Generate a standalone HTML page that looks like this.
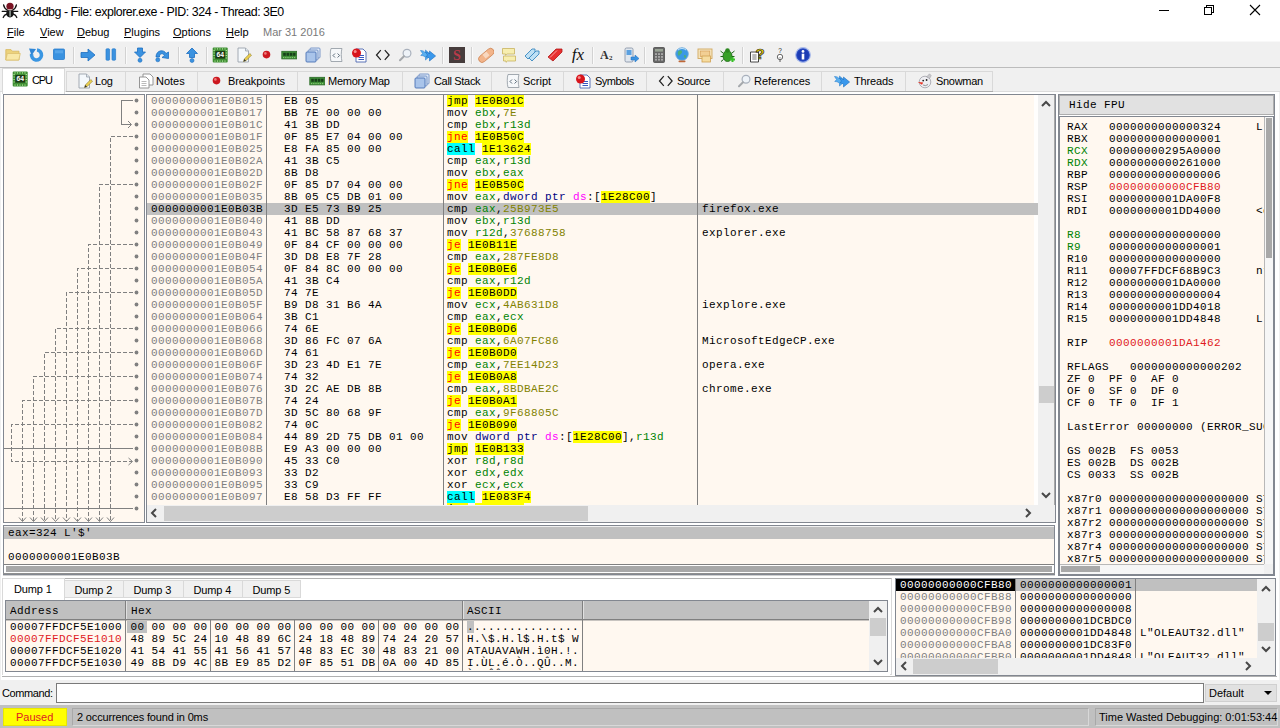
<!DOCTYPE html>
<html><head><meta charset="utf-8"><title>x64dbg - File: explorer.exe - PID: 324 - Thread: 3E0</title>
<style>
html,body{margin:0;padding:0}
body{width:1280px;height:728px;overflow:hidden;background:#f0f0f0;position:relative;font-family:"Liberation Sans",sans-serif;font-size:11px;color:#000}
#w{position:absolute;left:0;top:0;width:1280px;height:728px;overflow:hidden}
#w div,#w span,#w svg{position:absolute;box-sizing:border-box}
.m{font-family:"Liberation Mono","DejaVu Sans Mono",monospace;font-size:11px;letter-spacing:0.4px;line-height:12px;height:12px;white-space:pre;color:#000}
.u{font-family:"Liberation Sans",sans-serif;font-size:11px;line-height:14px;white-space:pre;color:#000}
.t{font-family:"Liberation Sans",sans-serif;font-size:12.4px;letter-spacing:-0.45px;line-height:16px;white-space:pre;color:#000}
.clip{overflow:hidden}
</style></head><body><div id="w">
<div style="left:0px;top:0px;width:1280px;height:41px;background:#ffffff;"></div>
<span class="t" style="left:23px;top:4px;">x64dbg - File: explorer.exe - PID: 324 - Thread: 3E0</span>
<svg style="left:0px;top:0px" width="20" height="20" viewBox="0 0 20 20"><g stroke="#111" stroke-width="1.3" fill="none" stroke-linecap="round"><path d="M7.5 10 C5 9 4 7 3.6 4.8 M12.5 10 C15 9 16 7 16.4 4.8 M2.2 11.3 H17.8 M7 14 C5 14.5 3.8 15.5 3.2 17.5 M13 14 C15 14.5 16.2 15.5 16.8 17.5"/></g><ellipse cx="10" cy="13" rx="3.7" ry="4.4" fill="#151515"/><rect x="9.5" y="10.5" width="1.1" height="6" fill="#c8d8d0"/><circle cx="10" cy="6.3" r="3.6" fill="#7a1424"/><rect x="7.5" y="9.2" width="5" height="1" fill="#e8c8c8"/></svg>
<svg style="left:1150px;top:0" width="130" height="22" viewBox="0 0 130 22"><g stroke="#000" stroke-width="1" fill="none" shape-rendering="crispEdges"><path d="M9 10.5 H19"/><rect x="54.5" y="7.5" width="7" height="7"/><path d="M56.5 7.5 V5.5 H63.5 V12.5 H61.5"/></g><path d="M100 5 L110 15 M110 5 L100 15" stroke="#000" stroke-width="1.1" fill="none"/></svg>
<span class="u" style="left:7px;top:25px;"><u>F</u>ile</span>
<span class="u" style="left:40px;top:25px;"><u>V</u>iew</span>
<span class="u" style="left:77px;top:25px;"><u>D</u>ebug</span>
<span class="u" style="left:124px;top:25px;"><u>P</u>lugins</span>
<span class="u" style="left:173px;top:25px;"><u>O</u>ptions</span>
<span class="u" style="left:226px;top:25px;"><u>H</u>elp</span>
<span class="u" style="left:263px;top:25px;color:#7a7a7a;">Mar 31 2016</span>
<div style="left:0px;top:41px;width:1280px;height:27px;background:#f0f0f0;"></div>
<div style="left:0px;top:41px;width:1280px;height:1px;background:#f8f8f8;"></div>
<div style="left:0px;top:67px;width:1280px;height:1px;background:#bcbcbc;"></div>
<svg style="left:5px;top:47px" width="16" height="16" viewBox="0 0 16 16"><path d="M0.8 2.6 H6 L7.3 4.2 H14 V13 H0.8 Z" fill="#ecd27c" stroke="#d8b85e" stroke-width=".8"/><path d="M0.8 13 L2.3 6.5 H15.3 L13.8 13 Z" fill="#f8e8a8" stroke="#dcc070" stroke-width=".8"/></svg>
<svg style="left:29px;top:47px" width="16" height="16" viewBox="0 0 16 16"><path d="M8 3 A5 5 0 1 1 2.6 7" fill="none" stroke="#3a96e2" stroke-width="3.6"/><path d="M0 1.6 L7 2 L2.6 8.4 Z" fill="#2f86d6"/></svg>
<svg style="left:52px;top:47px" width="16" height="16" viewBox="0 0 16 16"><rect x="1.5" y="2" width="11" height="10.5" rx="1" fill="#3a92e0" stroke="#2a7ccc" stroke-width=".8"/><rect x="3" y="3.3" width="8" height="3" fill="#6bb3ee" opacity=".6"/></svg>
<div style="left:73px;top:47px;width:1px;height:17px;background:#d2d2d2;"></div>
<div style="left:74px;top:47px;width:1px;height:17px;background:#fafafa;"></div>
<svg style="left:80px;top:47px" width="16" height="16" viewBox="0 0 16 16"><path d="M1 5.5 H8 V2 L15 8 L8 14 V10.5 H1 Z" fill="#3a92e0" stroke="#1d6fc0" stroke-width=".8"/></svg>
<svg style="left:103px;top:47px" width="16" height="16" viewBox="0 0 16 16"><rect x="3" y="1.8" width="3.6" height="11.4" rx=".8" fill="#3a92e0" stroke="#2a7ccc" stroke-width=".7"/><rect x="9" y="1.8" width="3.6" height="11.4" rx=".8" fill="#3a92e0" stroke="#2a7ccc" stroke-width=".7"/></svg>
<div style="left:125px;top:47px;width:1px;height:17px;background:#d2d2d2;"></div>
<div style="left:126px;top:47px;width:1px;height:17px;background:#fafafa;"></div>
<svg style="left:132px;top:47px" width="16" height="16" viewBox="0 0 16 16"><path d="M5.5 1 H10.5 V5 H13.5 L8 10.5 L2.5 5 H5.5 Z" fill="#3a92e0" stroke="#1d6fc0" stroke-width=".8"/><circle cx="8" cy="13.3" r="2" fill="#3a92e0" stroke="#1d6fc0" stroke-width=".6"/></svg>
<svg style="left:154px;top:47px" width="16" height="16" viewBox="0 0 16 16"><path d="M2 10 C2 3 10 2 12 6.5 L14.5 5 L14.5 11.5 L8 10.5 L10.5 8.5 C9 5.5 5 6.5 5.5 10 Z" fill="#3a92e0" stroke="#1d6fc0" stroke-width=".8"/><circle cx="3.8" cy="12.8" r="2" fill="#3a92e0" stroke="#1d6fc0" stroke-width=".6"/></svg>
<div style="left:178px;top:47px;width:1px;height:17px;background:#d2d2d2;"></div>
<div style="left:179px;top:47px;width:1px;height:17px;background:#fafafa;"></div>
<svg style="left:184px;top:47px" width="16" height="16" viewBox="0 0 16 16"><path d="M5.5 10.5 H10.5 V6.5 H13.5 L8 1 L2.5 6.5 H5.5 Z" fill="#3a92e0" stroke="#1d6fc0" stroke-width=".8"/><circle cx="8" cy="13.5" r="2" fill="#3a92e0" stroke="#1d6fc0" stroke-width=".6"/></svg>
<div style="left:206px;top:47px;width:1px;height:17px;background:#d2d2d2;"></div>
<div style="left:207px;top:47px;width:1px;height:17px;background:#fafafa;"></div>
<svg style="left:212px;top:47px" width="16" height="16" viewBox="0 0 16 16"><rect x="0.7" y="0.5" width="15" height="15" rx="1" fill="#3f8f34"/><path d="M3 1.2 V2.6 M5.5 1.2 V2.6 M8 1.2 V2.6 M10.5 1.2 V2.6 M13 1.2 V2.6 M3 13.4 V14.8 M5.5 13.4 V14.8 M8 13.4 V14.8 M10.5 13.4 V14.8 M13 13.4 V14.8 M1.4 3.5 H2.8 M1.4 6 H2.8 M1.4 8.5 H2.8 M1.4 11 H2.8 M13.6 3.5 H15 M13.6 6 H15 M13.6 8.5 H15 M13.6 11 H15" stroke="#a8dc90" stroke-width="1"/><rect x="3.3" y="4" width="9.8" height="7.6" fill="#1c3a16"/><text x="8.2" y="10.4" font-family="Liberation Sans,sans-serif" font-size="6.8" font-weight="bold" fill="#fff" text-anchor="middle">64</text></svg>
<svg style="left:237px;top:47px" width="16" height="16" viewBox="0 0 16 16"><path d="M1 1 H8.5 L11.5 4 V15 H1 Z" fill="#f4f8fc" stroke="#9aa2ac" stroke-width=".9"/><path d="M8.5 1 V4 H11.5" fill="#dde4ec" stroke="#9aa2ac" stroke-width=".8"/><path d="M6.5 14.5 L7.3 12 L12.8 6.5 L14.5 8.2 L9 13.7 Z" fill="#ecd050" stroke="#8a7a30" stroke-width=".6"/><path d="M6.5 14.5 L7.3 12 L9 13.7 Z" fill="#333"/></svg>
<svg style="left:258px;top:47px" width="16" height="16" viewBox="0 0 16 16"><circle cx="8.5" cy="7.6" r="3.8" fill="#cc1820"/><circle cx="7.4" cy="6.4" r="1.3" fill="#ee7a7a"/></svg>
<svg style="left:281px;top:47px" width="16" height="16" viewBox="0 0 16 16"><rect x="0.8" y="4.3" width="15" height="7.6" fill="#3f8f38" stroke="#2a6a26" stroke-width=".8"/><rect x="2.2" y="5.8" width="2.6" height="3" fill="#17401a"/><rect x="5.5" y="5.8" width="2.6" height="3" fill="#17401a"/><rect x="8.8" y="5.8" width="2.6" height="3" fill="#17401a"/><rect x="12.1" y="5.8" width="2.4" height="3" fill="#17401a"/><path d="M2 10.6 H14.6" stroke="#8fce7c" stroke-width="1" stroke-dasharray="1.2 1"/></svg>
<svg style="left:305px;top:47px" width="16" height="16" viewBox="0 0 16 16"><rect x="5" y="1" width="10" height="10" rx="1" fill="#dfe9f7" stroke="#6f8fc4" stroke-width=".9"/><rect x="3" y="3" width="10" height="10" rx="1" fill="#cfdef3" stroke="#6f8fc4" stroke-width=".9"/><rect x="1" y="5" width="10" height="10" rx="1" fill="#a9c4ea" stroke="#4a72b4" stroke-width=".9"/></svg>
<svg style="left:328px;top:47px" width="16" height="16" viewBox="0 0 16 16"><path d="M3 1.5 H14 C13 4 13 11 14 14.5 H3 C2 11 2 4 3 1.5 Z" fill="#f6f8fa" stroke="#98a0a8" stroke-width=".9"/><path d="M7 6.5 L5 8.5 L7 10.5 M9.6 6.5 L11.6 8.5 L9.6 10.5" fill="none" stroke="#4a5a6a" stroke-width=".9"/></svg>
<svg style="left:351px;top:47px" width="16" height="16" viewBox="0 0 16 16"><path d="M5 2 H12 L15 5 V15 H5 Z" fill="#fff" stroke="#4a64b0" stroke-width=".9"/><path d="M7.5 8.5 H13 M7.5 10.5 H13 M7.5 12.5 H13" stroke="#3858c0" stroke-width="1"/><circle cx="5.5" cy="6" r="4.5" fill="#d8141c"/><circle cx="4.2" cy="4.6" r="1.5" fill="#f48a8a"/></svg>
<svg style="left:375px;top:47px" width="16" height="16" viewBox="0 0 16 16"><path d="M5.8 3.2 L1.5 8 L5.8 12.8 M9.8 3.2 L14.1 8 L9.8 12.8" fill="none" stroke="#222" stroke-width="1.25"/></svg>
<svg style="left:397px;top:47px" width="16" height="16" viewBox="0 0 16 16"><circle cx="10" cy="6.3" r="3.9" fill="#eef3f8" stroke="#a8b0bc" stroke-width="1.2"/><path d="M7 9.3 L3 13.3" stroke="#a4a8ac" stroke-width="2" stroke-linecap="round"/></svg>
<svg style="left:420px;top:47px" width="16" height="16" viewBox="0 0 16 16"><path d="M0.5 3.5 C3 3.5 4.5 4.5 5.5 6 V3 L11 8 L5.5 13 V10.5 C4 9 3 8.5 0.8 8.5 L2.6 6.5 Z" fill="#5ab0f0" stroke="#2a80d0" stroke-width=".6"/><path d="M5.5 5 C7.5 5 8.5 5.8 9.5 7 V4 L15.6 9 L9.5 14 V11.3 C8.3 10.2 7.3 10 5.8 10 L7.5 8 Z" fill="#3a98ec" stroke="#1d6fc0" stroke-width=".6"/></svg>
<div style="left:442px;top:47px;width:1px;height:17px;background:#d2d2d2;"></div>
<div style="left:443px;top:47px;width:1px;height:17px;background:#fafafa;"></div>
<svg style="left:449px;top:47px" width="16" height="16" viewBox="0 0 16 16"><rect x="0" y="0" width="16" height="16" fill="#463c3c"/><text x="8" y="13" font-family="Liberation Serif,serif" font-size="14" font-weight="bold" fill="#b83a4a" text-anchor="middle">S</text></svg>
<div style="left:471px;top:47px;width:1px;height:17px;background:#d2d2d2;"></div>
<div style="left:472px;top:47px;width:1px;height:17px;background:#fafafa;"></div>
<svg style="left:478px;top:47px" width="16" height="16" viewBox="0 0 16 16"><rect x="-1" y="5" width="18" height="7" rx="3.5" fill="#f2b48a" stroke="#d08858" stroke-width=".8" transform="rotate(-40 8 8)"/><rect x="5.5" y="5.5" width="5" height="5" fill="#f8d8c0" transform="rotate(-40 8 8)"/></svg>
<svg style="left:501px;top:47px" width="16" height="16" viewBox="0 0 16 16"><path d="M1.5 1.5 H13.5 V7 H6 L4.5 8.2 V7 H1.5 Z" fill="#f7eeb0" stroke="#c8b25e" stroke-width=".8"/><path d="M2.5 9 H14.5 V14 H6.5 L5 15.3 V14 H2.5 Z" fill="#f7eeb0" stroke="#c8b25e" stroke-width=".8"/></svg>
<svg style="left:524px;top:47px" width="16" height="16" viewBox="0 0 16 16"><path d="M1 9 L8 2 L11 2 L11 5 L4 12 Z" fill="#bfe0f4" stroke="#3a88c0" stroke-width=".9" /><path d="M5 13 L12 6 L15 6 L15 9 L8 16 Z" fill="#bfe0f4" stroke="#3a88c0" stroke-width=".9" transform="translate(0,-2)"/></svg>
<svg style="left:547px;top:47px" width="16" height="16" viewBox="0 0 16 16"><path d="M1 10 L9 2 L15 2 L15 5 L6 14 Z" fill="#e83030" stroke="#b01818" stroke-width=".8"/><path d="M3 10.5 L10 3.5" stroke="#f8a0a0" stroke-width="1"/></svg>
<svg style="left:570px;top:47px" width="16" height="16" viewBox="0 0 16 16"><text x="8" y="13" font-family="Liberation Serif,serif" font-size="17" font-style="italic" fill="#111" text-anchor="middle">fx</text></svg>
<div style="left:592px;top:47px;width:1px;height:17px;background:#d2d2d2;"></div>
<div style="left:593px;top:47px;width:1px;height:17px;background:#fafafa;"></div>
<svg style="left:600px;top:47px" width="16" height="16" viewBox="0 0 16 16"><text x="0" y="12" font-family="Liberation Serif,serif" font-size="12" font-weight="bold" fill="#333">A</text><text x="9" y="12.5" font-family="Liberation Serif,serif" font-size="7" font-weight="bold" fill="#333">2</text></svg>
<svg style="left:623px;top:47px" width="16" height="16" viewBox="0 0 16 16"><rect x="2" y="1" width="8" height="14" rx="1.5" fill="#dfe6ee" stroke="#8a96a8" stroke-width=".9"/><rect x="3.5" y="3" width="5" height="5" fill="#5aa0e0"/><path d="M8 10 H12 V8 L16 11.5 L12 15 V13 H8 Z" fill="#3a92e0" stroke="#1d6fc0" stroke-width=".5"/></svg>
<div style="left:644px;top:47px;width:1px;height:17px;background:#d2d2d2;"></div>
<div style="left:645px;top:47px;width:1px;height:17px;background:#fafafa;"></div>
<svg style="left:651px;top:47px" width="16" height="16" viewBox="0 0 16 16"><rect x="2.5" y="0.5" width="11" height="15" rx="1" fill="#666" stroke="#4a4a4a" stroke-width=".8"/><rect x="4" y="2" width="8" height="2.6" fill="#9aa496"/><g fill="#a8a8a8"><rect x="4" y="6.2" width="2" height="1.8"/><rect x="7" y="6.2" width="2" height="1.8"/><rect x="10" y="6.2" width="2" height="1.8"/><rect x="4" y="9" width="2" height="1.8"/><rect x="7" y="9" width="2" height="1.8"/><rect x="10" y="9" width="2" height="1.8"/><rect x="4" y="11.8" width="2" height="1.8"/><rect x="7" y="11.8" width="2" height="1.8"/><rect x="10" y="11.8" width="2" height="1.8"/></g></svg>
<svg style="left:674px;top:47px" width="16" height="16" viewBox="0 0 16 16"><circle cx="8" cy="7" r="6.3" fill="#3a98e4" stroke="#6aa8d8" stroke-width=".8"/><path d="M4.5 4 C6 2.5 8.5 3 8 5.5 C7.5 7.5 5.5 7 5 9 C3.5 8 3.5 5 4.5 4 Z M10 8 C11.5 7.5 12.5 9 12 10.5 C11 11.5 9.5 10.5 10 8 Z" fill="#4cb07a"/><path d="M4 3 A6 6 0 0 1 12 3" stroke="#bfe0f8" stroke-width="1" fill="none"/><rect x="4.5" y="13.5" width="7" height="1.8" rx=".8" fill="#c06838"/></svg>
<svg style="left:697px;top:47px" width="16" height="16" viewBox="0 0 16 16"><rect x="1" y="2" width="14" height="9.5" fill="#f6e6c0" stroke="#d0a860" stroke-width=".9"/><rect x="3.2" y="4" width="9.6" height="5.5" fill="#f2cf94" stroke="#d09850" stroke-width=".6"/><rect x="5" y="9" width="8.5" height="6" fill="#f6dca0" stroke="#d0a050" stroke-width=".8"/></svg>
<svg style="left:720px;top:47px" width="16" height="16" viewBox="0 0 16 16"><ellipse cx="7.5" cy="9" rx="4.5" ry="5.5" fill="#38a028" stroke="#1c6814" stroke-width=".8"/><circle cx="7.5" cy="3.5" r="2.3" fill="#2c8820"/><path d="M3 6 L0.5 4 M12 6 L14.5 4 M3 9.5 H0.5 M12 9.5 H14.5 M3.5 12.5 L1 14.5" stroke="#1c6814" stroke-width="1"/><path d="M12.5 10 V15 M10 12.5 H15" stroke="#38c028" stroke-width="2"/></svg>
<div style="left:742px;top:47px;width:1px;height:17px;background:#d2d2d2;"></div>
<div style="left:743px;top:47px;width:1px;height:17px;background:#fafafa;"></div>
<svg style="left:749px;top:47px" width="16" height="16" viewBox="0 0 16 16"><path d="M1.5 5 H9.5 V15 H1.5 Z" fill="#fff" stroke="#333" stroke-width=".9"/><path d="M3.3 8 H7.6 M3.3 10 H7.6 M3.3 12 H7.6" stroke="#666" stroke-width=".9"/><text x="11" y="12" font-family="Liberation Sans,sans-serif" font-size="15" font-weight="bold" fill="#f4dc00" stroke="#222" stroke-width=".7" text-anchor="middle">?</text></svg>
<svg style="left:772px;top:47px" width="16" height="16" viewBox="0 0 16 16"><text x="8" y="5.5" font-family="Liberation Sans,sans-serif" font-size="6.5" fill="#222" text-anchor="middle">?</text><circle cx="8" cy="10" r="2.7" fill="#fff" stroke="#444" stroke-width=".8"/><path d="M8 12.7 V15" stroke="#444" stroke-width=".9"/><path d="M6.8 10.6 Q8 11.6 9.2 10.6" stroke="#444" stroke-width=".5" fill="none"/></svg>
<svg style="left:795px;top:47px" width="16" height="16" viewBox="0 0 16 16"><circle cx="8" cy="8" r="7.4" fill="#2a4cc4" stroke="#b0c0ec" stroke-width="1.1"/><circle cx="8" cy="8" r="5.8" fill="#1c3cb4"/><circle cx="8" cy="4.4" r="1.4" fill="#fff"/><rect x="6.7" y="6.7" width="2.6" height="5.8" fill="#fff"/></svg>
<div style="left:0px;top:68px;width:1280px;height:25px;background:#f0f0f0;"></div>
<div style="left:0px;top:91px;width:1280px;height:1px;background:#dcdcdc;"></div>
<div style="left:66px;top:91px;width:927px;height:1px;background:#acacac;"></div>
<div style="left:1px;top:92px;width:1278px;height:588px;background:#ffffff;"></div>
<div style="left:2px;top:676px;width:1275px;height:1px;background:#b0b0b0;"></div>
<div style="left:2px;top:68px;width:63px;height:26px;background:#ffffff;border:1px solid #d9d9d9;border-bottom:none;"></div>
<svg style="left:12px;top:71px" width="16" height="16" viewBox="0 0 16 16"><rect x="0.7" y="0.5" width="15" height="15" rx="1" fill="#3f8f34"/><path d="M3 1.2 V2.6 M5.5 1.2 V2.6 M8 1.2 V2.6 M10.5 1.2 V2.6 M13 1.2 V2.6 M3 13.4 V14.8 M5.5 13.4 V14.8 M8 13.4 V14.8 M10.5 13.4 V14.8 M13 13.4 V14.8 M1.4 3.5 H2.8 M1.4 6 H2.8 M1.4 8.5 H2.8 M1.4 11 H2.8 M13.6 3.5 H15 M13.6 6 H15 M13.6 8.5 H15 M13.6 11 H15" stroke="#a8dc90" stroke-width="1"/><rect x="3.3" y="4" width="9.8" height="7.6" fill="#1c3a16"/><text x="8.2" y="10.4" font-family="Liberation Sans,sans-serif" font-size="6.8" font-weight="bold" fill="#fff" text-anchor="middle">64</text></svg>
<span class="u" style="left:32px;top:73px;letter-spacing:-1.2px;">CPU</span>
<div style="left:66px;top:71px;width:60px;height:20px;background:#f0f0f0;border:1px solid #d9d9d9;border-bottom:none;"></div>
<svg style="left:78px;top:73px" width="16" height="16" viewBox="0 0 16 16"><path d="M1 1 H8.5 L11.5 4 V15 H1 Z" fill="#f4f8fc" stroke="#9aa2ac" stroke-width=".9"/><path d="M8.5 1 V4 H11.5" fill="#dde4ec" stroke="#9aa2ac" stroke-width=".8"/><path d="M6.5 14.5 L7.3 12 L12.8 6.5 L14.5 8.2 L9 13.7 Z" fill="#ecd050" stroke="#8a7a30" stroke-width=".6"/><path d="M6.5 14.5 L7.3 12 L9 13.7 Z" fill="#333"/></svg>
<span class="u" style="left:95px;top:74px;letter-spacing:-0.2px;">Log</span>
<div style="left:125px;top:71px;width:73px;height:20px;background:#f0f0f0;border:1px solid #d9d9d9;border-bottom:none;"></div>
<svg style="left:138px;top:73px" width="16" height="16" viewBox="0 0 16 16"><path d="M5 1 H12 L15 4 V12 H5 Z" fill="#fff" stroke="#8a8a8a" stroke-width=".9"/><path d="M1.5 4 H8 L11 7 V15 H1.5 Z" fill="#fff" stroke="#8a8a8a" stroke-width=".9"/><path d="M3.5 8.5 H8.5 M3.5 10.5 H8.5 M3.5 12.5 H8.5" stroke="#a8a8a8" stroke-width=".8"/></svg>
<span class="u" style="left:156px;top:74px;letter-spacing:0px;">Notes</span>
<div style="left:197px;top:71px;width:101px;height:20px;background:#f0f0f0;border:1px solid #d9d9d9;border-bottom:none;"></div>
<svg style="left:208px;top:73px" width="16" height="16" viewBox="0 0 16 16"><circle cx="8.5" cy="7.6" r="3.8" fill="#cc1820"/><circle cx="7.4" cy="6.4" r="1.3" fill="#ee7a7a"/></svg>
<span class="u" style="left:228px;top:74px;letter-spacing:-0.1px;">Breakpoints</span>
<div style="left:297px;top:71px;width:106px;height:20px;background:#f0f0f0;border:1px solid #d9d9d9;border-bottom:none;"></div>
<svg style="left:309px;top:73px" width="16" height="16" viewBox="0 0 16 16"><rect x="0.8" y="4.3" width="15" height="7.6" fill="#3f8f38" stroke="#2a6a26" stroke-width=".8"/><rect x="2.2" y="5.8" width="2.6" height="3" fill="#17401a"/><rect x="5.5" y="5.8" width="2.6" height="3" fill="#17401a"/><rect x="8.8" y="5.8" width="2.6" height="3" fill="#17401a"/><rect x="12.1" y="5.8" width="2.4" height="3" fill="#17401a"/><path d="M2 10.6 H14.6" stroke="#8fce7c" stroke-width="1" stroke-dasharray="1.2 1"/></svg>
<span class="u" style="left:328px;top:74px;letter-spacing:-0.25px;">Memory Map</span>
<div style="left:402px;top:71px;width:90px;height:20px;background:#f0f0f0;border:1px solid #d9d9d9;border-bottom:none;"></div>
<svg style="left:414px;top:73px" width="16" height="16" viewBox="0 0 16 16"><rect x="5" y="1" width="10" height="10" rx="1" fill="#dfe9f7" stroke="#6f8fc4" stroke-width=".9"/><rect x="3" y="3" width="10" height="10" rx="1" fill="#cfdef3" stroke="#6f8fc4" stroke-width=".9"/><rect x="1" y="5" width="10" height="10" rx="1" fill="#a9c4ea" stroke="#4a72b4" stroke-width=".9"/></svg>
<span class="u" style="left:434px;top:74px;letter-spacing:-0.33px;">Call Stack</span>
<div style="left:491px;top:71px;width:73px;height:20px;background:#f0f0f0;border:1px solid #d9d9d9;border-bottom:none;"></div>
<svg style="left:505px;top:73px" width="16" height="16" viewBox="0 0 16 16"><path d="M3 1.5 H14 C13 4 13 11 14 14.5 H3 C2 11 2 4 3 1.5 Z" fill="#f6f8fa" stroke="#98a0a8" stroke-width=".9"/><path d="M7 6.5 L5 8.5 L7 10.5 M9.6 6.5 L11.6 8.5 L9.6 10.5" fill="none" stroke="#4a5a6a" stroke-width=".9"/></svg>
<span class="u" style="left:523px;top:74px;letter-spacing:0px;">Script</span>
<div style="left:563px;top:71px;width:84px;height:20px;background:#f0f0f0;border:1px solid #d9d9d9;border-bottom:none;"></div>
<svg style="left:575px;top:73px" width="16" height="16" viewBox="0 0 16 16"><path d="M5 2 H12 L15 5 V15 H5 Z" fill="#fff" stroke="#4a64b0" stroke-width=".9"/><path d="M7.5 8.5 H13 M7.5 10.5 H13 M7.5 12.5 H13" stroke="#3858c0" stroke-width="1"/><circle cx="5.5" cy="6" r="4.5" fill="#d8141c"/><circle cx="4.2" cy="4.6" r="1.5" fill="#f48a8a"/></svg>
<span class="u" style="left:595px;top:74px;letter-spacing:-0.5px;">Symbols</span>
<div style="left:646px;top:71px;width:78px;height:20px;background:#f0f0f0;border:1px solid #d9d9d9;border-bottom:none;"></div>
<svg style="left:658px;top:73px" width="16" height="16" viewBox="0 0 16 16"><path d="M5.8 3.2 L1.5 8 L5.8 12.8 M9.8 3.2 L14.1 8 L9.8 12.8" fill="none" stroke="#222" stroke-width="1.25"/></svg>
<span class="u" style="left:677px;top:74px;letter-spacing:-0.3px;">Source</span>
<div style="left:723px;top:71px;width:99px;height:20px;background:#f0f0f0;border:1px solid #d9d9d9;border-bottom:none;"></div>
<svg style="left:736px;top:73px" width="16" height="16" viewBox="0 0 16 16"><circle cx="10" cy="6.3" r="3.9" fill="#eef3f8" stroke="#a8b0bc" stroke-width="1.2"/><path d="M7 9.3 L3 13.3" stroke="#a4a8ac" stroke-width="2" stroke-linecap="round"/></svg>
<span class="u" style="left:754px;top:74px;letter-spacing:0px;">References</span>
<div style="left:821px;top:71px;width:85px;height:20px;background:#f0f0f0;border:1px solid #d9d9d9;border-bottom:none;"></div>
<svg style="left:834px;top:73px" width="16" height="16" viewBox="0 0 16 16"><path d="M0.5 3.5 C3 3.5 4.5 4.5 5.5 6 V3 L11 8 L5.5 13 V10.5 C4 9 3 8.5 0.8 8.5 L2.6 6.5 Z" fill="#5ab0f0" stroke="#2a80d0" stroke-width=".6"/><path d="M5.5 5 C7.5 5 8.5 5.8 9.5 7 V4 L15.6 9 L9.5 14 V11.3 C8.3 10.2 7.3 10 5.8 10 L7.5 8 Z" fill="#3a98ec" stroke="#1d6fc0" stroke-width=".6"/></svg>
<span class="u" style="left:854px;top:74px;letter-spacing:-0.15px;">Threads</span>
<div style="left:905px;top:71px;width:88px;height:20px;background:#f0f0f0;border:1px solid #d9d9d9;border-bottom:none;"></div>
<svg style="left:917px;top:73px" width="16" height="16" viewBox="0 0 16 16"><circle cx="8" cy="9" r="5.8" fill="#eeeeF2" stroke="#a8a8b0" stroke-width=".9"/><path d="M9.5 4 L12.5 0.8 L14.2 2.6 L12.6 5.6 Z" fill="#c8c8cc" stroke="#9a9aa2" stroke-width=".5"/><circle cx="6.2" cy="7.6" r=".9" fill="#222"/><circle cx="9.6" cy="7" r=".9" fill="#222"/><path d="M0.8 9 L6.2 9.6 L5 11.8 Z" fill="#e83020"/><path d="M6 12 Q8.5 13.5 11 11.5" stroke="#555" stroke-width=".6" fill="none"/></svg>
<span class="u" style="left:936px;top:74px;letter-spacing:-0.3px;">Snowman</span>
<div style="left:3px;top:94px;width:142px;height:429px;background:#fff8f0;border:1px solid #828790;"></div>
<div style="left:146px;top:94px;width:910px;height:429px;background:#fff8f0;border:1px solid #828790;"></div>
<div class="clip" style="left:147px;top:95px;width:891px;height:410px;">
<div style="left:887px;top:0px;width:4px;height:410px;background:#fffefd;"></div>
<div style="left:0px;top:108px;width:891px;height:12px;background:#c0c0c0;"></div>
<div style="left:119px;top:0px;width:1px;height:410px;background:#808080;"></div>
<div style="left:296px;top:0px;width:1px;height:410px;background:#808080;"></div>
<div style="left:550px;top:0px;width:1px;height:410px;background:#808080;"></div>
<span class="m" style="left:4px;top:0px;color:#808080;">0000000001E0B015</span>
<span class="m" style="left:137px;top:0px;">EB 05</span>
<span class="m" style="left:300px;top:0px;color:#000;background:#ffff00;">jmp</span>
<span class="m" style="left:328px;top:0px;color:#000;background:#ffff00;">1E0B01C</span>
<span class="m" style="left:4px;top:12px;color:#808080;">0000000001E0B017</span>
<span class="m" style="left:137px;top:12px;">BB 7E 00 00 00</span>
<span class="m" style="left:300px;top:12px;color:#000;">mov</span>
<span class="m" style="left:328px;top:12px;color:#008300;">ebx</span>
<span class="m" style="left:349px;top:12px;color:#000;">,</span>
<span class="m" style="left:356px;top:12px;color:#828200;">7E</span>
<span class="m" style="left:4px;top:24px;color:#808080;">0000000001E0B01C</span>
<span class="m" style="left:137px;top:24px;">41 3B DD</span>
<span class="m" style="left:300px;top:24px;color:#000;">cmp</span>
<span class="m" style="left:328px;top:24px;color:#008300;">ebx</span>
<span class="m" style="left:349px;top:24px;color:#000;">,</span>
<span class="m" style="left:356px;top:24px;color:#008300;">r13d</span>
<span class="m" style="left:4px;top:36px;color:#808080;">0000000001E0B01F</span>
<span class="m" style="left:137px;top:36px;">0F 85 E7 04 00 00</span>
<span class="m" style="left:300px;top:36px;color:#ff0000;background:#ffff00;">jne</span>
<span class="m" style="left:328px;top:36px;color:#000;background:#ffff00;">1E0B50C</span>
<span class="m" style="left:4px;top:48px;color:#808080;">0000000001E0B025</span>
<span class="m" style="left:137px;top:48px;">E8 FA 85 00 00</span>
<span class="m" style="left:300px;top:48px;color:#000;background:#00ffff;">call</span>
<span class="m" style="left:335px;top:48px;color:#000;background:#ffff00;">1E13624</span>
<span class="m" style="left:4px;top:60px;color:#808080;">0000000001E0B02A</span>
<span class="m" style="left:137px;top:60px;">41 3B C5</span>
<span class="m" style="left:300px;top:60px;color:#000;">cmp</span>
<span class="m" style="left:328px;top:60px;color:#008300;">eax</span>
<span class="m" style="left:349px;top:60px;color:#000;">,</span>
<span class="m" style="left:356px;top:60px;color:#008300;">r13d</span>
<span class="m" style="left:4px;top:72px;color:#808080;">0000000001E0B02D</span>
<span class="m" style="left:137px;top:72px;">8B D8</span>
<span class="m" style="left:300px;top:72px;color:#000;">mov</span>
<span class="m" style="left:328px;top:72px;color:#008300;">ebx</span>
<span class="m" style="left:349px;top:72px;color:#000;">,</span>
<span class="m" style="left:356px;top:72px;color:#008300;">eax</span>
<span class="m" style="left:4px;top:84px;color:#808080;">0000000001E0B02F</span>
<span class="m" style="left:137px;top:84px;">0F 85 D7 04 00 00</span>
<span class="m" style="left:300px;top:84px;color:#ff0000;background:#ffff00;">jne</span>
<span class="m" style="left:328px;top:84px;color:#000;background:#ffff00;">1E0B50C</span>
<span class="m" style="left:4px;top:96px;color:#808080;">0000000001E0B035</span>
<span class="m" style="left:137px;top:96px;">8B 05 C5 DB 01 00</span>
<span class="m" style="left:300px;top:96px;color:#000;">mov</span>
<span class="m" style="left:328px;top:96px;color:#008300;">eax</span>
<span class="m" style="left:349px;top:96px;color:#000;">,</span>
<span class="m" style="left:356px;top:96px;color:#000080;">dword ptr</span>
<span class="m" style="left:426px;top:96px;color:#ff00ff;">ds</span>
<span class="m" style="left:440px;top:96px;color:#000;">:</span>
<span class="m" style="left:447px;top:96px;color:#000;">[</span>
<span class="m" style="left:454px;top:96px;color:#000;background:#ffff00;">1E28C00</span>
<span class="m" style="left:503px;top:96px;color:#000;">]</span>
<span class="m" style="left:4px;top:108px;color:#000;">0000000001E0B03B</span>
<span class="m" style="left:137px;top:108px;">3D E5 73 B9 25</span>
<span class="m" style="left:300px;top:108px;color:#000;">cmp</span>
<span class="m" style="left:328px;top:108px;color:#008300;">eax</span>
<span class="m" style="left:349px;top:108px;color:#000;">,</span>
<span class="m" style="left:356px;top:108px;color:#828200;">25B973E5</span>
<span class="m" style="left:555px;top:108px;">firefox.exe</span>
<span class="m" style="left:4px;top:120px;color:#808080;">0000000001E0B040</span>
<span class="m" style="left:137px;top:120px;">41 8B DD</span>
<span class="m" style="left:300px;top:120px;color:#000;">mov</span>
<span class="m" style="left:328px;top:120px;color:#008300;">ebx</span>
<span class="m" style="left:349px;top:120px;color:#000;">,</span>
<span class="m" style="left:356px;top:120px;color:#008300;">r13d</span>
<span class="m" style="left:4px;top:132px;color:#808080;">0000000001E0B043</span>
<span class="m" style="left:137px;top:132px;">41 BC 58 87 68 37</span>
<span class="m" style="left:300px;top:132px;color:#000;">mov</span>
<span class="m" style="left:328px;top:132px;color:#008300;">r12d</span>
<span class="m" style="left:356px;top:132px;color:#000;">,</span>
<span class="m" style="left:363px;top:132px;color:#828200;">37688758</span>
<span class="m" style="left:555px;top:132px;">explorer.exe</span>
<span class="m" style="left:4px;top:144px;color:#808080;">0000000001E0B049</span>
<span class="m" style="left:137px;top:144px;">0F 84 CF 00 00 00</span>
<span class="m" style="left:300px;top:144px;color:#ff0000;background:#ffff00;">je</span>
<span class="m" style="left:321px;top:144px;color:#000;background:#ffff00;">1E0B11E</span>
<span class="m" style="left:4px;top:156px;color:#808080;">0000000001E0B04F</span>
<span class="m" style="left:137px;top:156px;">3D D8 E8 7F 28</span>
<span class="m" style="left:300px;top:156px;color:#000;">cmp</span>
<span class="m" style="left:328px;top:156px;color:#008300;">eax</span>
<span class="m" style="left:349px;top:156px;color:#000;">,</span>
<span class="m" style="left:356px;top:156px;color:#828200;">287FE8D8</span>
<span class="m" style="left:4px;top:168px;color:#808080;">0000000001E0B054</span>
<span class="m" style="left:137px;top:168px;">0F 84 8C 00 00 00</span>
<span class="m" style="left:300px;top:168px;color:#ff0000;background:#ffff00;">je</span>
<span class="m" style="left:321px;top:168px;color:#000;background:#ffff00;">1E0B0E6</span>
<span class="m" style="left:4px;top:180px;color:#808080;">0000000001E0B05A</span>
<span class="m" style="left:137px;top:180px;">41 3B C4</span>
<span class="m" style="left:300px;top:180px;color:#000;">cmp</span>
<span class="m" style="left:328px;top:180px;color:#008300;">eax</span>
<span class="m" style="left:349px;top:180px;color:#000;">,</span>
<span class="m" style="left:356px;top:180px;color:#008300;">r12d</span>
<span class="m" style="left:4px;top:192px;color:#808080;">0000000001E0B05D</span>
<span class="m" style="left:137px;top:192px;">74 7E</span>
<span class="m" style="left:300px;top:192px;color:#ff0000;background:#ffff00;">je</span>
<span class="m" style="left:321px;top:192px;color:#000;background:#ffff00;">1E0B0DD</span>
<span class="m" style="left:4px;top:204px;color:#808080;">0000000001E0B05F</span>
<span class="m" style="left:137px;top:204px;">B9 D8 31 B6 4A</span>
<span class="m" style="left:300px;top:204px;color:#000;">mov</span>
<span class="m" style="left:328px;top:204px;color:#008300;">ecx</span>
<span class="m" style="left:349px;top:204px;color:#000;">,</span>
<span class="m" style="left:356px;top:204px;color:#828200;">4AB631D8</span>
<span class="m" style="left:555px;top:204px;">iexplore.exe</span>
<span class="m" style="left:4px;top:216px;color:#808080;">0000000001E0B064</span>
<span class="m" style="left:137px;top:216px;">3B C1</span>
<span class="m" style="left:300px;top:216px;color:#000;">cmp</span>
<span class="m" style="left:328px;top:216px;color:#008300;">eax</span>
<span class="m" style="left:349px;top:216px;color:#000;">,</span>
<span class="m" style="left:356px;top:216px;color:#008300;">ecx</span>
<span class="m" style="left:4px;top:228px;color:#808080;">0000000001E0B066</span>
<span class="m" style="left:137px;top:228px;">74 6E</span>
<span class="m" style="left:300px;top:228px;color:#ff0000;background:#ffff00;">je</span>
<span class="m" style="left:321px;top:228px;color:#000;background:#ffff00;">1E0B0D6</span>
<span class="m" style="left:4px;top:240px;color:#808080;">0000000001E0B068</span>
<span class="m" style="left:137px;top:240px;">3D 86 FC 07 6A</span>
<span class="m" style="left:300px;top:240px;color:#000;">cmp</span>
<span class="m" style="left:328px;top:240px;color:#008300;">eax</span>
<span class="m" style="left:349px;top:240px;color:#000;">,</span>
<span class="m" style="left:356px;top:240px;color:#828200;">6A07FC86</span>
<span class="m" style="left:555px;top:240px;">MicrosoftEdgeCP.exe</span>
<span class="m" style="left:4px;top:252px;color:#808080;">0000000001E0B06D</span>
<span class="m" style="left:137px;top:252px;">74 61</span>
<span class="m" style="left:300px;top:252px;color:#ff0000;background:#ffff00;">je</span>
<span class="m" style="left:321px;top:252px;color:#000;background:#ffff00;">1E0B0D0</span>
<span class="m" style="left:4px;top:264px;color:#808080;">0000000001E0B06F</span>
<span class="m" style="left:137px;top:264px;">3D 23 4D E1 7E</span>
<span class="m" style="left:300px;top:264px;color:#000;">cmp</span>
<span class="m" style="left:328px;top:264px;color:#008300;">eax</span>
<span class="m" style="left:349px;top:264px;color:#000;">,</span>
<span class="m" style="left:356px;top:264px;color:#828200;">7EE14D23</span>
<span class="m" style="left:555px;top:264px;">opera.exe</span>
<span class="m" style="left:4px;top:276px;color:#808080;">0000000001E0B074</span>
<span class="m" style="left:137px;top:276px;">74 32</span>
<span class="m" style="left:300px;top:276px;color:#ff0000;background:#ffff00;">je</span>
<span class="m" style="left:321px;top:276px;color:#000;background:#ffff00;">1E0B0A8</span>
<span class="m" style="left:4px;top:288px;color:#808080;">0000000001E0B076</span>
<span class="m" style="left:137px;top:288px;">3D 2C AE DB 8B</span>
<span class="m" style="left:300px;top:288px;color:#000;">cmp</span>
<span class="m" style="left:328px;top:288px;color:#008300;">eax</span>
<span class="m" style="left:349px;top:288px;color:#000;">,</span>
<span class="m" style="left:356px;top:288px;color:#828200;">8BDBAE2C</span>
<span class="m" style="left:555px;top:288px;">chrome.exe</span>
<span class="m" style="left:4px;top:300px;color:#808080;">0000000001E0B07B</span>
<span class="m" style="left:137px;top:300px;">74 24</span>
<span class="m" style="left:300px;top:300px;color:#ff0000;background:#ffff00;">je</span>
<span class="m" style="left:321px;top:300px;color:#000;background:#ffff00;">1E0B0A1</span>
<span class="m" style="left:4px;top:312px;color:#808080;">0000000001E0B07D</span>
<span class="m" style="left:137px;top:312px;">3D 5C 80 68 9F</span>
<span class="m" style="left:300px;top:312px;color:#000;">cmp</span>
<span class="m" style="left:328px;top:312px;color:#008300;">eax</span>
<span class="m" style="left:349px;top:312px;color:#000;">,</span>
<span class="m" style="left:356px;top:312px;color:#828200;">9F68805C</span>
<span class="m" style="left:4px;top:324px;color:#808080;">0000000001E0B082</span>
<span class="m" style="left:137px;top:324px;">74 0C</span>
<span class="m" style="left:300px;top:324px;color:#ff0000;background:#ffff00;">je</span>
<span class="m" style="left:321px;top:324px;color:#000;background:#ffff00;">1E0B090</span>
<span class="m" style="left:4px;top:336px;color:#808080;">0000000001E0B084</span>
<span class="m" style="left:137px;top:336px;">44 89 2D 75 DB 01 00</span>
<span class="m" style="left:300px;top:336px;color:#000;">mov</span>
<span class="m" style="left:328px;top:336px;color:#000080;">dword ptr</span>
<span class="m" style="left:398px;top:336px;color:#ff00ff;">ds</span>
<span class="m" style="left:412px;top:336px;color:#000;">:</span>
<span class="m" style="left:419px;top:336px;color:#000;">[</span>
<span class="m" style="left:426px;top:336px;color:#000;background:#ffff00;">1E28C00</span>
<span class="m" style="left:475px;top:336px;color:#000;">]</span>
<span class="m" style="left:482px;top:336px;color:#000;">,</span>
<span class="m" style="left:489px;top:336px;color:#008300;">r13d</span>
<span class="m" style="left:4px;top:348px;color:#808080;">0000000001E0B08B</span>
<span class="m" style="left:137px;top:348px;">E9 A3 00 00 00</span>
<span class="m" style="left:300px;top:348px;color:#000;background:#ffff00;">jmp</span>
<span class="m" style="left:328px;top:348px;color:#000;background:#ffff00;">1E0B133</span>
<span class="m" style="left:4px;top:360px;color:#808080;">0000000001E0B090</span>
<span class="m" style="left:137px;top:360px;">45 33 C0</span>
<span class="m" style="left:300px;top:360px;color:#000;">xor</span>
<span class="m" style="left:328px;top:360px;color:#008300;">r8d</span>
<span class="m" style="left:349px;top:360px;color:#000;">,</span>
<span class="m" style="left:356px;top:360px;color:#008300;">r8d</span>
<span class="m" style="left:4px;top:372px;color:#808080;">0000000001E0B093</span>
<span class="m" style="left:137px;top:372px;">33 D2</span>
<span class="m" style="left:300px;top:372px;color:#000;">xor</span>
<span class="m" style="left:328px;top:372px;color:#008300;">edx</span>
<span class="m" style="left:349px;top:372px;color:#000;">,</span>
<span class="m" style="left:356px;top:372px;color:#008300;">edx</span>
<span class="m" style="left:4px;top:384px;color:#808080;">0000000001E0B095</span>
<span class="m" style="left:137px;top:384px;">33 C9</span>
<span class="m" style="left:300px;top:384px;color:#000;">xor</span>
<span class="m" style="left:328px;top:384px;color:#008300;">ecx</span>
<span class="m" style="left:349px;top:384px;color:#000;">,</span>
<span class="m" style="left:356px;top:384px;color:#008300;">ecx</span>
<span class="m" style="left:4px;top:396px;color:#808080;">0000000001E0B097</span>
<span class="m" style="left:137px;top:396px;">E8 58 D3 FF FF</span>
<span class="m" style="left:300px;top:396px;color:#000;background:#00ffff;">call</span>
<span class="m" style="left:335px;top:396px;color:#000;background:#ffff00;">1E083F4</span>
<span class="m" style="left:4px;top:408px;color:#808080;">0000000001E0B09C</span>
<span class="m" style="left:137px;top:408px;">EB 1D</span>
<span class="m" style="left:300px;top:408px;color:#000;background:#ffff00;">jmp</span>
<span class="m" style="left:328px;top:408px;color:#000;background:#ffff00;">1E0B0BB</span>
</div>
<div style="left:1038px;top:95px;width:17px;height:410px;background:#f0f0f0;"></div>
<div style="left:1054px;top:95px;width:1px;height:427px;background:#a8a8a8;"></div>
<div style="left:1039px;top:386px;width:15px;height:17px;background:#cdcdcd;"></div>
<svg style="left:1041px;top:100px" width="10" height="7" viewBox="0 0 10 7"><path d="M1 6 L5 2 L9 6" stroke="#484848" stroke-width="2" fill="none"/></svg>
<svg style="left:1041px;top:492px" width="10" height="7" viewBox="0 0 10 7"><path d="M1 1 L5 5 L9 1" stroke="#484848" stroke-width="2" fill="none"/></svg>
<div style="left:147px;top:505px;width:908px;height:17px;background:#f0f0f0;"></div>
<div style="left:164px;top:506px;width:424px;height:15px;background:#cdcdcd;"></div>
<svg style="left:150px;top:508px" width="7" height="10" viewBox="0 0 7 10"><path d="M6 1 L2 5 L6 9" stroke="#484848" stroke-width="2" fill="none"/></svg>
<svg style="left:1025px;top:508px" width="7" height="10" viewBox="0 0 7 10"><path d="M1 1 L5 5 L1 9" stroke="#484848" stroke-width="2" fill="none"/></svg>
<svg style="left:4px;top:95px" width="140" height="427" viewBox="4 95 140 427" shape-rendering="crispEdges"><circle cx="136.5" cy="100.5" r="1.9" fill="#808080" shape-rendering="auto"/><circle cx="136.5" cy="112.5" r="1.9" fill="#808080" shape-rendering="auto"/><circle cx="136.5" cy="124.5" r="1.9" fill="#808080" shape-rendering="auto"/><circle cx="136.5" cy="136.5" r="1.9" fill="#808080" shape-rendering="auto"/><circle cx="136.5" cy="148.5" r="1.9" fill="#808080" shape-rendering="auto"/><circle cx="136.5" cy="160.5" r="1.9" fill="#808080" shape-rendering="auto"/><circle cx="136.5" cy="172.5" r="1.9" fill="#808080" shape-rendering="auto"/><circle cx="136.5" cy="184.5" r="1.9" fill="#808080" shape-rendering="auto"/><circle cx="136.5" cy="196.5" r="1.9" fill="#808080" shape-rendering="auto"/><circle cx="136.5" cy="208.5" r="1.9" fill="#808080" shape-rendering="auto"/><circle cx="136.5" cy="220.5" r="1.9" fill="#808080" shape-rendering="auto"/><circle cx="136.5" cy="232.5" r="1.9" fill="#808080" shape-rendering="auto"/><circle cx="136.5" cy="244.5" r="1.9" fill="#808080" shape-rendering="auto"/><circle cx="136.5" cy="256.5" r="1.9" fill="#808080" shape-rendering="auto"/><circle cx="136.5" cy="268.5" r="1.9" fill="#808080" shape-rendering="auto"/><circle cx="136.5" cy="280.5" r="1.9" fill="#808080" shape-rendering="auto"/><circle cx="136.5" cy="292.5" r="1.9" fill="#808080" shape-rendering="auto"/><circle cx="136.5" cy="304.5" r="1.9" fill="#808080" shape-rendering="auto"/><circle cx="136.5" cy="316.5" r="1.9" fill="#808080" shape-rendering="auto"/><circle cx="136.5" cy="328.5" r="1.9" fill="#808080" shape-rendering="auto"/><circle cx="136.5" cy="340.5" r="1.9" fill="#808080" shape-rendering="auto"/><circle cx="136.5" cy="352.5" r="1.9" fill="#808080" shape-rendering="auto"/><circle cx="136.5" cy="364.5" r="1.9" fill="#808080" shape-rendering="auto"/><circle cx="136.5" cy="376.5" r="1.9" fill="#808080" shape-rendering="auto"/><circle cx="136.5" cy="388.5" r="1.9" fill="#808080" shape-rendering="auto"/><circle cx="136.5" cy="400.5" r="1.9" fill="#808080" shape-rendering="auto"/><circle cx="136.5" cy="412.5" r="1.9" fill="#808080" shape-rendering="auto"/><circle cx="136.5" cy="424.5" r="1.9" fill="#808080" shape-rendering="auto"/><circle cx="136.5" cy="436.5" r="1.9" fill="#808080" shape-rendering="auto"/><circle cx="136.5" cy="448.5" r="1.9" fill="#808080" shape-rendering="auto"/><circle cx="136.5" cy="460.5" r="1.9" fill="#808080" shape-rendering="auto"/><circle cx="136.5" cy="472.5" r="1.9" fill="#808080" shape-rendering="auto"/><circle cx="136.5" cy="484.5" r="1.9" fill="#808080" shape-rendering="auto"/><circle cx="136.5" cy="496.5" r="1.9" fill="#808080" shape-rendering="auto"/><circle cx="136.5" cy="508.5" r="1.9" fill="#808080" shape-rendering="auto"/><path d="M133 100.5 H121.5 V124.5 H131" stroke="#808080" fill="none"/><path d="M128 121 L131.5 124.5 L128 128" stroke="#808080" fill="none" shape-rendering="auto"/><path d="M133 136.5 H110.5 V521" stroke="#808080" fill="none" stroke-dasharray="4 2"/><path d="M107.0 517.5 L110.5 521.5 L114.0 517.5" stroke="#808080" fill="none" shape-rendering="auto"/><path d="M133 184.5 H99.5 V521" stroke="#808080" fill="none" stroke-dasharray="4 2"/><path d="M96.0 517.5 L99.5 521.5 L103.0 517.5" stroke="#808080" fill="none" shape-rendering="auto"/><path d="M133 244.5 H88.5 V521" stroke="#808080" fill="none" stroke-dasharray="4 2"/><path d="M85.0 517.5 L88.5 521.5 L92.0 517.5" stroke="#808080" fill="none" shape-rendering="auto"/><path d="M133 268.5 H77.5 V521" stroke="#808080" fill="none" stroke-dasharray="4 2"/><path d="M74.0 517.5 L77.5 521.5 L81.0 517.5" stroke="#808080" fill="none" shape-rendering="auto"/><path d="M133 292.5 H66.5 V521" stroke="#808080" fill="none" stroke-dasharray="4 2"/><path d="M63.0 517.5 L66.5 521.5 L70.0 517.5" stroke="#808080" fill="none" shape-rendering="auto"/><path d="M133 328.5 H55.5 V521" stroke="#808080" fill="none" stroke-dasharray="4 2"/><path d="M52.0 517.5 L55.5 521.5 L59.0 517.5" stroke="#808080" fill="none" shape-rendering="auto"/><path d="M133 352.5 H44.5 V521" stroke="#808080" fill="none" stroke-dasharray="4 2"/><path d="M41.0 517.5 L44.5 521.5 L48.0 517.5" stroke="#808080" fill="none" shape-rendering="auto"/><path d="M133 376.5 H33.5 V521" stroke="#808080" fill="none" stroke-dasharray="4 2"/><path d="M30.0 517.5 L33.5 521.5 L37.0 517.5" stroke="#808080" fill="none" shape-rendering="auto"/><path d="M133 400.5 H22.5 V521" stroke="#808080" fill="none" stroke-dasharray="4 2"/><path d="M19.0 517.5 L22.5 521.5 L26.0 517.5" stroke="#808080" fill="none" shape-rendering="auto"/><path d="M133 424.5 H11.5 V461.5 H132" stroke="#808080" fill="none" stroke-dasharray="4 2"/><path d="M128.5 458.0 L132.5 461.5 L128.5 465.0" stroke="#808080" fill="none" shape-rendering="auto"/><path d="M133 448.5 H4" stroke="#808080" fill="none"/><path d="M133 508.5 H4" stroke="#808080" fill="none"/></svg>
<div style="left:3px;top:525px;width:1052px;height:50px;background:#fff8f0;border:1px solid #828790;"></div>
<div style="left:4px;top:526px;width:1050px;height:1px;background:#f0f0f0;"></div>
<div style="left:4px;top:527px;width:1050px;height:12px;background:#c0c0c0;"></div>
<span class="m" style="left:8px;top:527px;">eax=324 L'$'</span>
<span class="m" style="left:8px;top:551px;">0000000001E0B03B</span>
<div style="left:4px;top:564px;width:1050px;height:1px;background:#808080;"></div>
<div style="left:4px;top:565px;width:1050px;height:9px;background:#ffffff;"></div>
<div style="left:6px;top:566px;width:1046px;height:6px;background:#a8a8a8;"></div>
<div style="left:3px;top:573px;width:1052px;height:1px;background:#909090;"></div>
<div style="left:3px;top:575px;width:1052px;height:1px;background:#d0d0d0;"></div>
<div style="left:1058px;top:94px;width:217px;height:482px;background:#ffffff;border:1px solid #828790;"></div>
<div style="left:1059px;top:95px;width:215px;height:20px;background:#e1e1e1;border:1px solid #adadad;"></div>
<span class="m" style="left:1069px;top:99px;">Hide FPU</span>
<div style="left:1059px;top:116px;width:215px;height:459px;background:#fff8f0;border:1px solid #828790;"></div>
<div class="clip" style="left:1060px;top:117px;width:204px;height:447px;">
<span class="m" style="left:7px;top:4px;">RAX</span>
<span class="m" style="left:49px;top:4px;">0000000000000324</span>
<span class="m" style="left:196px;top:4px;">L</span>
<span class="m" style="left:7px;top:16px;">RBX</span>
<span class="m" style="left:49px;top:16px;">0000000000000001</span>
<span class="m" style="left:7px;top:28px;color:#008300;">RCX</span>
<span class="m" style="left:49px;top:28px;">00000000295A0000</span>
<span class="m" style="left:7px;top:40px;color:#008300;">RDX</span>
<span class="m" style="left:49px;top:40px;">0000000000261000</span>
<span class="m" style="left:7px;top:52px;">RBP</span>
<span class="m" style="left:49px;top:52px;">0000000000000006</span>
<span class="m" style="left:7px;top:64px;">RSP</span>
<span class="m" style="left:49px;top:64px;color:#e01a22;">00000000000CFB80</span>
<span class="m" style="left:7px;top:76px;">RSI</span>
<span class="m" style="left:49px;top:76px;">0000000001DA00F8</span>
<span class="m" style="left:7px;top:88px;">RDI</span>
<span class="m" style="left:49px;top:88px;">0000000001DD4000</span>
<span class="m" style="left:196px;top:88px;">&lt;explorer.EntryPoint&gt;</span>
<span class="m" style="left:7px;top:112px;color:#008300;">R8</span>
<span class="m" style="left:49px;top:112px;">0000000000000000</span>
<span class="m" style="left:7px;top:124px;color:#008300;">R9</span>
<span class="m" style="left:49px;top:124px;">0000000000000001</span>
<span class="m" style="left:7px;top:136px;">R10</span>
<span class="m" style="left:49px;top:136px;">0000000000000000</span>
<span class="m" style="left:7px;top:148px;">R11</span>
<span class="m" style="left:49px;top:148px;">00007FFDCF68B9C3</span>
<span class="m" style="left:196px;top:148px;">ntdll.00007FFDCF68B9C3</span>
<span class="m" style="left:7px;top:160px;">R12</span>
<span class="m" style="left:49px;top:160px;">0000000001DA0000</span>
<span class="m" style="left:7px;top:172px;">R13</span>
<span class="m" style="left:49px;top:172px;">0000000000000004</span>
<span class="m" style="left:7px;top:184px;">R14</span>
<span class="m" style="left:49px;top:184px;">0000000001DD4018</span>
<span class="m" style="left:7px;top:196px;">R15</span>
<span class="m" style="left:49px;top:196px;">0000000001DD4848</span>
<span class="m" style="left:196px;top:196px;">L"OLEAUT32.dll"</span>
<span class="m" style="left:7px;top:220px;">RIP</span>
<span class="m" style="left:49px;top:220px;color:#e01a22;">0000000001DA1462</span>
<span class="m" style="left:7px;top:244px;">RFLAGS</span>
<span class="m" style="left:70px;top:244px;">0000000000000202</span>
<span class="m" style="left:7px;top:256px;">ZF</span>
<span class="m" style="left:28px;top:256px;">0</span>
<span class="m" style="left:49px;top:256px;">PF</span>
<span class="m" style="left:70px;top:256px;">0</span>
<span class="m" style="left:91px;top:256px;">AF</span>
<span class="m" style="left:112px;top:256px;">0</span>
<span class="m" style="left:7px;top:268px;">OF</span>
<span class="m" style="left:28px;top:268px;">0</span>
<span class="m" style="left:49px;top:268px;">SF</span>
<span class="m" style="left:70px;top:268px;">0</span>
<span class="m" style="left:91px;top:268px;">DF</span>
<span class="m" style="left:112px;top:268px;">0</span>
<span class="m" style="left:7px;top:280px;">CF</span>
<span class="m" style="left:28px;top:280px;">0</span>
<span class="m" style="left:49px;top:280px;">TF</span>
<span class="m" style="left:70px;top:280px;">0</span>
<span class="m" style="left:91px;top:280px;">IF</span>
<span class="m" style="left:112px;top:280px;">1</span>
<span class="m" style="left:7px;top:304px;">LastError</span>
<span class="m" style="left:77px;top:304px;">00000000</span>
<span class="m" style="left:140px;top:304px;">(ERROR_SUCCESS)</span>
<span class="m" style="left:7px;top:328px;">GS</span>
<span class="m" style="left:28px;top:328px;">002B</span>
<span class="m" style="left:70px;top:328px;">FS</span>
<span class="m" style="left:91px;top:328px;">0053</span>
<span class="m" style="left:7px;top:340px;">ES</span>
<span class="m" style="left:28px;top:340px;">002B</span>
<span class="m" style="left:70px;top:340px;">DS</span>
<span class="m" style="left:91px;top:340px;">002B</span>
<span class="m" style="left:7px;top:352px;">CS</span>
<span class="m" style="left:28px;top:352px;">0033</span>
<span class="m" style="left:70px;top:352px;">SS</span>
<span class="m" style="left:91px;top:352px;">002B</span>
<span class="m" style="left:7px;top:376px;">x87r0</span>
<span class="m" style="left:49px;top:376px;">00000000000000000000</span>
<span class="m" style="left:196px;top:376px;">ST0 Empty 0.0</span>
<span class="m" style="left:7px;top:388px;">x87r1</span>
<span class="m" style="left:49px;top:388px;">00000000000000000000</span>
<span class="m" style="left:196px;top:388px;">ST1 Empty 0.0</span>
<span class="m" style="left:7px;top:400px;">x87r2</span>
<span class="m" style="left:49px;top:400px;">00000000000000000000</span>
<span class="m" style="left:196px;top:400px;">ST2 Empty 0.0</span>
<span class="m" style="left:7px;top:412px;">x87r3</span>
<span class="m" style="left:49px;top:412px;">00000000000000000000</span>
<span class="m" style="left:196px;top:412px;">ST3 Empty 0.0</span>
<span class="m" style="left:7px;top:424px;">x87r4</span>
<span class="m" style="left:49px;top:424px;">00000000000000000000</span>
<span class="m" style="left:196px;top:424px;">ST4 Empty 0.0</span>
<span class="m" style="left:7px;top:436px;">x87r5</span>
<span class="m" style="left:49px;top:436px;">00000000000000000000</span>
<span class="m" style="left:196px;top:436px;">ST5 Empty 0.0</span>
<span class="m" style="left:7px;top:448px;">x87r6</span>
<span class="m" style="left:49px;top:448px;">00000000000000000000</span>
<span class="m" style="left:196px;top:448px;">ST6 Empty 0.0</span>
</div>
<div style="left:1264px;top:117px;width:9px;height:447px;background:#f6f6f6;"></div>
<div style="left:1264px;top:117px;width:1px;height:457px;background:#b8b8b8;"></div>
<div style="left:1266px;top:118px;width:6px;height:140px;background:#a8a8a8;"></div>
<div style="left:1060px;top:564px;width:213px;height:10px;background:#f6f6f6;"></div>
<div style="left:1060px;top:564px;width:213px;height:1px;background:#b8b8b8;"></div>
<div style="left:1061px;top:566px;width:39px;height:6px;background:#a8a8a8;"></div>
<div style="left:1264px;top:564px;width:9px;height:10px;background:#f0f0f0;"></div>
<div style="left:2px;top:578px;width:890px;height:97px;background:#ffffff;border:1px solid #d9d9d9;border-top-color:#b0b0b0;"></div>
<div style="left:2px;top:578px;width:63px;height:23px;background:#ffffff;border:1px solid #d9d9d9;border-bottom:none;"></div>
<span class="u" style="left:14px;top:582px;letter-spacing:-0.15px;">Dump 1</span>
<div style="left:64px;top:580px;width:60px;height:18px;background:#f0f0f0;border:1px solid #d9d9d9;"></div>
<span class="u" style="left:74.5px;top:583px;letter-spacing:-0.15px;">Dump 2</span>
<div style="left:123px;top:580px;width:61px;height:18px;background:#f0f0f0;border:1px solid #d9d9d9;"></div>
<span class="u" style="left:133.5px;top:583px;letter-spacing:-0.15px;">Dump 3</span>
<div style="left:183px;top:580px;width:60px;height:18px;background:#f0f0f0;border:1px solid #d9d9d9;"></div>
<span class="u" style="left:193.5px;top:583px;letter-spacing:-0.15px;">Dump 4</span>
<div style="left:242px;top:580px;width:59px;height:18px;background:#f0f0f0;border:1px solid #d9d9d9;"></div>
<span class="u" style="left:252.5px;top:583px;letter-spacing:-0.15px;">Dump 5</span>
<div style="left:3px;top:600px;width:887px;height:75px;background:#ffffff;"></div>
<div style="left:5px;top:600px;width:883px;height:72px;background:#fff8f0;border:1px solid #828790;"></div>
<div style="left:6px;top:601px;width:863px;height:19px;background:#c0c0c0;"></div>
<div style="left:125px;top:601px;width:1px;height:19px;background:#808080;"></div>
<div style="left:126px;top:601px;width:1px;height:19px;background:#e0e0e0;"></div>
<div style="left:462px;top:601px;width:1px;height:19px;background:#808080;"></div>
<div style="left:463px;top:601px;width:1px;height:19px;background:#e0e0e0;"></div>
<div style="left:582px;top:601px;width:1px;height:19px;background:#808080;"></div>
<div style="left:583px;top:601px;width:1px;height:19px;background:#e0e0e0;"></div>
<div style="left:6px;top:619px;width:863px;height:1px;background:#808080;"></div>
<div style="left:6px;top:620px;width:863px;height:1px;background:#c8c4c0;"></div>
<span class="m" style="left:10px;top:605px;">Address</span>
<span class="m" style="left:131px;top:605px;">Hex</span>
<span class="m" style="left:467px;top:605px;">ASCII</span>
<div class="clip" style="left:6px;top:620px;width:863px;height:51px;">
<div style="left:121px;top:1px;width:20px;height:12px;background:#c0c0c0;"></div>
<div style="left:461px;top:1px;width:7px;height:12px;background:#c0c0c0;"></div>
<div style="left:119px;top:0px;width:1px;height:51px;background:#808080;"></div>
<div style="left:204px;top:0px;width:1px;height:51px;background:#808080;"></div>
<div style="left:288px;top:0px;width:1px;height:51px;background:#808080;"></div>
<div style="left:372px;top:0px;width:1px;height:51px;background:#808080;"></div>
<div style="left:456px;top:0px;width:1px;height:51px;background:#808080;"></div>
<div style="left:576px;top:0px;width:1px;height:51px;background:#808080;"></div>
<span class="m" style="left:4px;top:1px;">00007FFDCF5E1000</span>
<span class="m" style="left:124.5px;top:1px;">00 00 00 00</span>
<span class="m" style="left:208.5px;top:1px;">00 00 00 00</span>
<span class="m" style="left:292.5px;top:1px;">00 00 00 00</span>
<span class="m" style="left:376.5px;top:1px;">00 00 00 00</span>
<span class="m" style="left:461px;top:1px;">................</span>
<span class="m" style="left:4px;top:13px;color:#e01a22;">00007FFDCF5E1010</span>
<span class="m" style="left:124.5px;top:13px;">48 89 5C 24</span>
<span class="m" style="left:208.5px;top:13px;">10 48 89 6C</span>
<span class="m" style="left:292.5px;top:13px;">24 18 48 89</span>
<span class="m" style="left:376.5px;top:13px;">74 24 20 57</span>
<span class="m" style="left:461px;top:13px;">H.\$.H.l$.H.t$ W</span>
<span class="m" style="left:4px;top:25px;">00007FFDCF5E1020</span>
<span class="m" style="left:124.5px;top:25px;">41 54 41 55</span>
<span class="m" style="left:208.5px;top:25px;">41 56 41 57</span>
<span class="m" style="left:292.5px;top:25px;">48 83 EC 30</span>
<span class="m" style="left:376.5px;top:25px;">48 83 21 00</span>
<span class="m" style="left:461px;top:25px;">ATAUAVAWH.ì0H.!.</span>
<span class="m" style="left:4px;top:37px;">00007FFDCF5E1030</span>
<span class="m" style="left:124.5px;top:37px;">49 8B D9 4C</span>
<span class="m" style="left:208.5px;top:37px;">8B E9 85 D2</span>
<span class="m" style="left:292.5px;top:37px;">0F 85 51 DB</span>
<span class="m" style="left:376.5px;top:37px;">0A 00 4D 85</span>
<span class="m" style="left:461px;top:37px;">I.ÙL.é.Ò..QÛ..M.</span>
<span class="m" style="left:4px;top:49px;">00007FFDCF5E1040</span>
<span class="m" style="left:124.5px;top:49px;">C0 0F 84 CA</span>
<span class="m" style="left:208.5px;top:49px;">DB 0A 00 48</span>
<span class="m" style="left:292.5px;top:49px;">8B 05 D9 2E</span>
<span class="m" style="left:376.5px;top:49px;">0E 00 48 85</span>
<span class="m" style="left:461px;top:49px;">À..ÊÛ..H..Ù...H.</span>
</div>
<div style="left:869px;top:601px;width:18px;height:70px;background:#f0f0f0;"></div>
<div style="left:870px;top:618px;width:16px;height:18px;background:#cdcdcd;"></div>
<svg style="left:873px;top:606px" width="10" height="7" viewBox="0 0 10 7"><path d="M1 6 L5 2 L9 6" stroke="#484848" stroke-width="2" fill="none"/></svg>
<svg style="left:873px;top:659px" width="10" height="7" viewBox="0 0 10 7"><path d="M1 1 L5 5 L9 1" stroke="#484848" stroke-width="2" fill="none"/></svg>
<div style="left:895px;top:578px;width:381px;height:98px;background:#fff8f0;border:1px solid #828790;"></div>
<div class="clip" style="left:895px;top:579px;width:362px;height:79px;">
<div style="left:1px;top:0px;width:119px;height:12px;background:#000000;"></div>
<div style="left:121px;top:0px;width:241px;height:12px;background:#c0c0c0;"></div>
<div style="left:120px;top:0px;width:1px;height:80px;background:#808080;"></div>
<div style="left:240px;top:0px;width:1px;height:80px;background:#808080;"></div>
<span class="m" style="left:5px;top:0px;color:#ffffff;">00000000000CFB80</span>
<span class="m" style="left:125px;top:0px;">0000000000000001</span>
<span class="m" style="left:5px;top:12px;color:#808080;">00000000000CFB88</span>
<span class="m" style="left:125px;top:12px;">0000000000000000</span>
<span class="m" style="left:5px;top:24px;color:#808080;">00000000000CFB90</span>
<span class="m" style="left:125px;top:24px;">0000000000000008</span>
<span class="m" style="left:5px;top:36px;color:#808080;">00000000000CFB98</span>
<span class="m" style="left:125px;top:36px;">0000000001DCBDC0</span>
<span class="m" style="left:5px;top:48px;color:#808080;">00000000000CFBA0</span>
<span class="m" style="left:125px;top:48px;">0000000001DD4848</span>
<span class="m" style="left:245px;top:48px;">L"OLEAUT32.dll"</span>
<span class="m" style="left:5px;top:60px;color:#808080;">00000000000CFBA8</span>
<span class="m" style="left:125px;top:60px;">0000000001DC83F0</span>
<span class="m" style="left:5px;top:72px;color:#808080;">00000000000CFBB0</span>
<span class="m" style="left:125px;top:72px;">0000000001DD4848</span>
<span class="m" style="left:245px;top:72px;">L"OLEAUT32.dll"</span>
</div>
<div style="left:1257px;top:579px;width:18px;height:79px;background:#f0f0f0;"></div>
<div style="left:1258px;top:623px;width:16px;height:18px;background:#cdcdcd;"></div>
<svg style="left:1261px;top:585px" width="10" height="7" viewBox="0 0 10 7"><path d="M1 6 L5 2 L9 6" stroke="#484848" stroke-width="2" fill="none"/></svg>
<svg style="left:1261px;top:646px" width="10" height="7" viewBox="0 0 10 7"><path d="M1 1 L5 5 L9 1" stroke="#484848" stroke-width="2" fill="none"/></svg>
<div style="left:896px;top:658px;width:379px;height:17px;background:#f0f0f0;"></div>
<div style="left:913px;top:659px;width:85px;height:15px;background:#cdcdcd;"></div>
<svg style="left:900px;top:661px" width="7" height="10" viewBox="0 0 7 10"><path d="M6 1 L2 5 L6 9" stroke="#484848" stroke-width="2" fill="none"/></svg>
<svg style="left:1245px;top:661px" width="7" height="10" viewBox="0 0 7 10"><path d="M1 1 L5 5 L1 9" stroke="#484848" stroke-width="2" fill="none"/></svg>
<span class="u" style="left:2px;top:686px;letter-spacing:-0.4px;">Command:</span>
<div style="left:56px;top:683px;width:1148px;height:20px;background:#ffffff;border:1px solid #7a7a7a;"></div>
<div style="left:1205px;top:684px;width:72px;height:18px;background:#e1e1e1;border:1px solid #d0d0d0;"></div>
<span class="u" style="left:1209px;top:686px;">Default</span>
<svg style="left:1264px;top:691px" width="8" height="4" viewBox="0 0 8 4"><path d="M0 0 H8 L4 4 Z" fill="#000"/></svg>
<div style="left:0px;top:705px;width:1280px;height:23px;background:#c0c0c0;"></div>
<div style="left:3px;top:708px;width:64px;height:18px;background:#ffff00;border:1px solid #e8e800;"></div>
<span class="u" style="left:16px;top:710px;color:#e01a22;">Paused</span>
<div style="left:72px;top:708px;width:1017px;height:18px;background:#c0c0c0;border:1px solid #a8a8a8;border-right-color:#d8d8d8;border-bottom-color:#d8d8d8;"></div>
<span class="u" style="left:77px;top:710px;letter-spacing:-0.16px;">2 occurrences found in 0ms</span>
<div style="left:1095px;top:708px;width:183px;height:18px;background:#c0c0c0;border:1px solid #a8a8a8;border-right-color:#d8d8d8;border-bottom-color:#d8d8d8;"></div>
<span class="u" style="left:1099px;top:710px;">Time Wasted Debugging: 0:01:53:44</span>
</div></body></html>
